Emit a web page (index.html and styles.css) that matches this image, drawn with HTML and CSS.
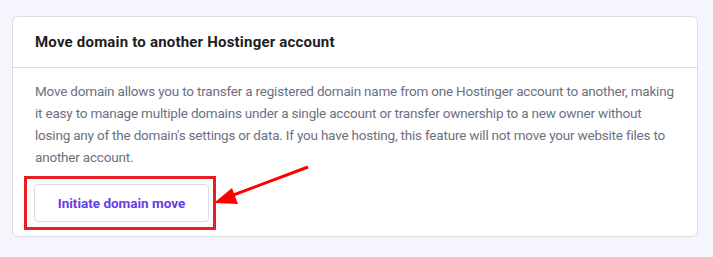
FILE: index.html
```html
<!DOCTYPE html>
<html lang="en">
<head>
    <meta charset="UTF-8">
    <meta name="viewport" content="width=device-width, initial-scale=1.0">
    <title>Move domain</title>
    <link rel="stylesheet" href="styles.css">
</head>
<body>
    <div class="card">
        <div class="card-header">
            <h2>Move domain to another Hostinger account</h2>
        </div>
        <div class="card-body">
            <p>Move domain allows you to transfer a registered domain name from one Hostinger account to another, making it easy to manage multiple domains under a single account or transfer ownership to a new owner without losing any of the domain's settings or data. If you have hosting, this feature will not move your website files to another account.</p>
            <div class="highlight">
                <button class="btn-outline">Initiate domain move</button>
            </div>
        </div>
    </div>

    <!-- annotation arrow -->
    <svg class="arrow" width="713" height="257" viewBox="0 0 713 257">
        <line x1="308" y1="167" x2="228" y2="197" stroke="#f00" stroke-width="3" />
        <polygon points="214,203 232,188 238,204" fill="#f00" />
    </svg>
</body>
</html>
```

FILE: styles.css
```css
body {
    margin: 0;
    padding: 16px 15px 20px 12px;
    background-color: #f4f5fd;
    font-family: Roboto, "DejaVu Sans", sans-serif;
}
.card {
    background-color: #fff;
    border: 1px solid #dcdce3;
    border-radius: 6px;
}
.card-header {
    height: 50px;
    padding: 0 22px;
    display: flex;
    align-items: center;
    border-bottom: 1px solid #dcdce3;
}
.card-header h2 {
    margin: 0;
    font-size: 15px;
    font-weight: 700;
    letter-spacing: 0.2px;
    color: #1d1e20;
}
.card-body {
    padding: 12px 18px 6px 22px;
}
.card-body p {
    margin: 0;
    font-size: 13.5px;
    letter-spacing: -0.2px;
    line-height: 22px;
    color: #6d7081;
}
.highlight {
    display: inline-block;
    margin: 8px 0 0 -11px;
    padding: 5px 4px 5px 7px;
    border: 3px solid #ea1c24;
}
.btn-outline {
    width: 175px;
    height: 38px;
    background-color: #fff;
    border: 1px solid #dadce0;
    border-radius: 4px;
    color: #673de6;
    font-family: inherit;
    font-size: 13.5px;
    font-weight: 700;
    cursor: pointer;
}
.arrow {
    position: absolute;
    left: 0;
    top: 0;
    pointer-events: none;
}
```
